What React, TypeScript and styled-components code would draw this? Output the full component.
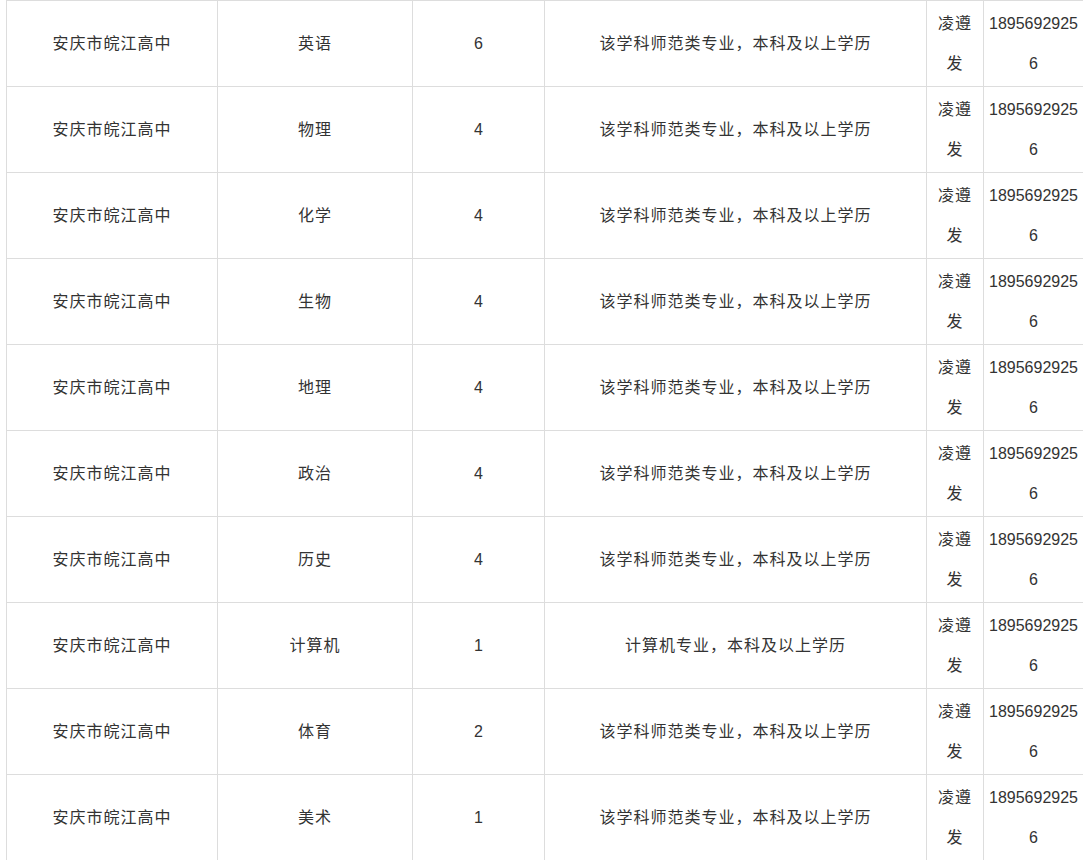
import styled, { createGlobalStyle } from 'styled-components'

const GlobalStyle = createGlobalStyle`
    html, body {
        margin: 0;
        padding: 0;
        background: #fff;
        overflow: hidden;
    }
    body {
        padding-left: 6px;
        font-family: "Liberation Sans", Arial, "Noto Sans CJK SC", sans-serif;
        color: #333;
    }
`

const Table = styled.div`
    display: grid;
    grid-template-columns: 211px 195px 132px 382px 57px 100px;
    width: 1078px;
    border-top: 1px solid #ddd;
    border-left: 1px solid #ddd;
    box-sizing: border-box;
`

const Cell = styled.div<{ $cjk?: boolean }>`
    box-sizing: border-box;
    height: 86px;
    padding: 0 4px;
    border-right: 1px solid #ddd;
    border-bottom: 1px solid #ddd;
    display: flex;
    align-items: center;
    justify-content: center;
    text-align: center;
    font-size: 16px;
    line-height: 40px;
    letter-spacing: ${({ $cjk }) => ($cjk ? '1px' : '0')};
    word-break: break-all;
`

const rows = [
    { subject: '英语', count: 6, req: '该学科师范类专业，本科及以上学历' },
    { subject: '物理', count: 4, req: '该学科师范类专业，本科及以上学历' },
    { subject: '化学', count: 4, req: '该学科师范类专业，本科及以上学历' },
    { subject: '生物', count: 4, req: '该学科师范类专业，本科及以上学历' },
    { subject: '地理', count: 4, req: '该学科师范类专业，本科及以上学历' },
    { subject: '政治', count: 4, req: '该学科师范类专业，本科及以上学历' },
    { subject: '历史', count: 4, req: '该学科师范类专业，本科及以上学历' },
    { subject: '计算机', count: 1, req: '计算机专业，本科及以上学历' },
    { subject: '体育', count: 2, req: '该学科师范类专业，本科及以上学历' },
    { subject: '美术', count: 1, req: '该学科师范类专业，本科及以上学历' },
]

export default function App() {
    return (
        <>
            <GlobalStyle />
            <Table>
                {rows.map((r, i) => (
                    <Row key={i} {...r} />
                ))}
            </Table>
        </>
    )
}

const Row = ({ subject, count, req }: { subject: string; count: number; req: string }) => (
    <>
        <Cell $cjk>安庆市皖江高中</Cell>
        <Cell $cjk>{subject}</Cell>
        <Cell>{count}</Cell>
        <Cell $cjk>{req}</Cell>
        <Cell $cjk>凌遵发</Cell>
        <Cell>18956929256</Cell>
    </>
)
